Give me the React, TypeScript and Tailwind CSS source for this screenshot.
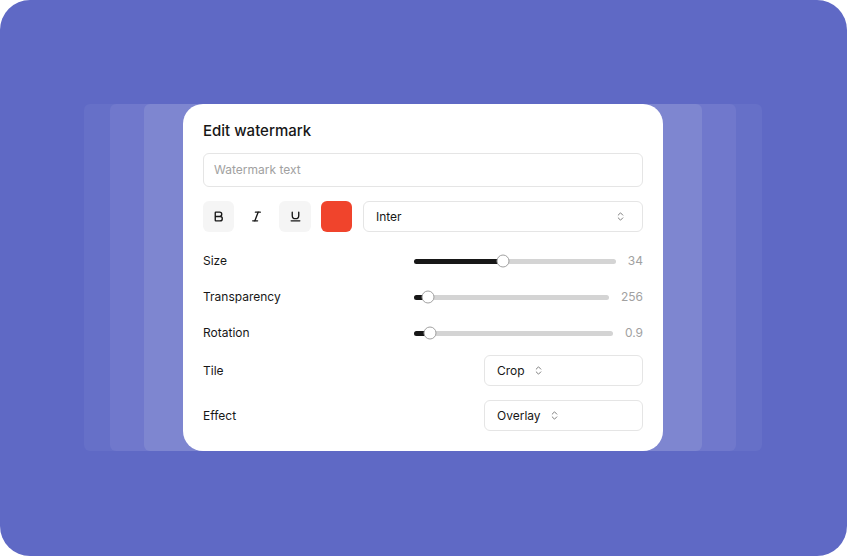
import React from 'react';
import { Bold, Italic, Underline, ChevronsUpDown } from 'lucide-react';

const SliderRow: React.FC<{ label: string; value: string; pct: number }> = ({ label, value, pct }) => (
  <div className="flex items-center h-5">
    <span className="text-xs text-neutral-900">{label}</span>
    <div className="ml-auto flex items-center gap-3 w-[229px]">
      <div className="relative flex-1 h-[5px] rounded-full bg-neutral-300">
        <div className="absolute left-0 top-0 h-full rounded-full bg-neutral-900" style={{ width: `${pct}%` }} />
        <div
          className="absolute top-1/2 -translate-y-1/2 -translate-x-1/2 w-[13px] h-[13px] rounded-full bg-white border border-neutral-400"
          style={{ left: `${pct}%` }}
        />
      </div>
      <span className="text-xs text-neutral-400">{value}</span>
    </div>
  </div>
);

const SelectRow: React.FC<{ label: string; value: string }> = ({ label, value }) => (
  <div className="flex items-center">
    <span className="text-xs text-neutral-900">{label}</span>
    <div className="ml-auto w-[159px] h-[31px] flex items-center gap-2 px-3 border border-neutral-200 rounded-md">
      <span className="text-xs text-neutral-900">{value}</span>
      <ChevronsUpDown className="w-[11px] h-[11px] text-neutral-500" strokeWidth={2} />
    </div>
  </div>
);

const App: React.FC = () => {
  return (
    <div className="w-[847px] h-[556px] bg-white" style={{ fontFamily: 'Inter, "Noto Sans", sans-serif' }}>
      <div className="w-full h-full rounded-[30px] bg-[#5f69c5] flex items-start pt-[104px] pl-[84px]">
        <div className="flex px-[26px] rounded-md bg-[#6670c8]">
          <div className="flex px-[34px] rounded-md bg-[#7078cc]">
            <div className="flex px-[39px] rounded-md bg-[#7e86d0]">
              <div className="w-[480px] bg-white rounded-[20px] px-5 pt-[17px] pb-5 flex flex-col">
                <h2 className="text-[15px] leading-5 font-medium text-neutral-900">Edit watermark</h2>

                <div className="mt-3 h-[34px] flex items-center px-[10px] border border-neutral-200 rounded-md">
                  <span className="text-xs text-neutral-400">Watermark text</span>
                </div>

                <div className="mt-[14px] flex items-center h-[31px]">
                  <div className="w-[31px] h-[31px] rounded-md bg-neutral-100 flex items-center justify-center">
                    <Bold className="w-[13px] h-[13px] text-neutral-900" strokeWidth={2.5} />
                  </div>
                  <div className="ml-[7px] w-[31px] h-[31px] rounded-md flex items-center justify-center">
                    <Italic className="w-[13px] h-[13px] text-neutral-900" strokeWidth={2.5} />
                  </div>
                  <div className="ml-[7px] w-[32px] h-[31px] rounded-md bg-neutral-100 flex items-center justify-center">
                    <Underline className="w-[13px] h-[13px] text-neutral-900" strokeWidth={2.5} />
                  </div>
                  <div className="ml-[10px] w-[31px] h-[31px] rounded-md bg-[#f0442c]" />
                  <div className="ml-[11px] flex-1 h-[31px] flex items-center justify-between pl-3 pr-4 border border-neutral-200 rounded-md">
                    <span className="text-xs text-neutral-900">Inter</span>
                    <ChevronsUpDown className="w-[11px] h-[11px] text-neutral-500" strokeWidth={2} />
                  </div>
                </div>

                <div className="mt-[19px] flex flex-col gap-4">
                  <SliderRow label="Size" value="34" pct={44} />
                  <SliderRow label="Transparency" value="256" pct={7} />
                  <SliderRow label="Rotation" value="0.9" pct={8} />
                </div>

                <div className="mt-3 flex flex-col gap-[14px]">
                  <SelectRow label="Tile" value="Crop" />
                  <SelectRow label="Effect" value="Overlay" />
                </div>
              </div>
            </div>
          </div>
        </div>
      </div>
    </div>
  );
};

export default App;
